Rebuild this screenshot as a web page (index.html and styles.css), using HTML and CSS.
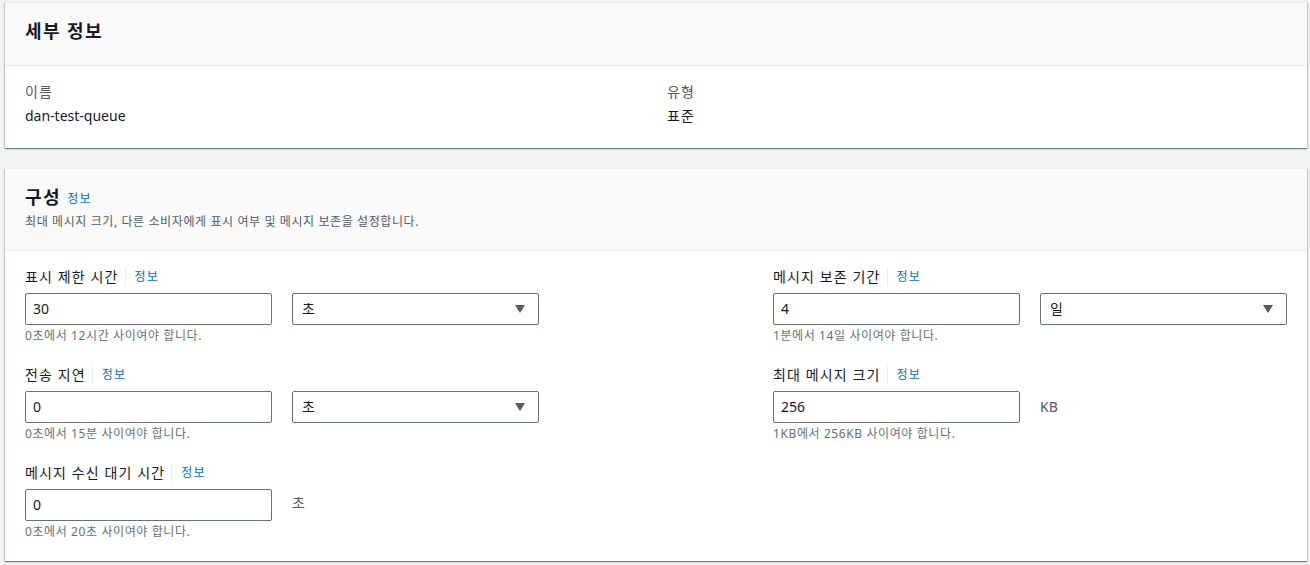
FILE: index.html
```html
<!DOCTYPE html>
<html lang="ko">
<head>
<meta charset="utf-8">
<title>dan-test-queue</title>
<link rel="stylesheet" href="styles.css">
</head>
<body>
<div class="page">
  <section class="card">
    <div class="card-header">
      <h2 class="title ko">세부 정보</h2>
    </div>
    <div class="card-body details">
      <div class="kv">
        <div class="k ko">이름</div>
        <div class="v">dan-test-queue</div>
      </div>
      <div class="kv">
        <div class="k ko">유형</div>
        <div class="v ko">표준</div>
      </div>
    </div>
  </section>

  <section class="card">
    <div class="card-header with-desc">
      <h2 class="title ko">구성 <a class="info head-info">정보</a></h2>
      <p class="desc ko">최대 메시지 크기, 다른 소비자에게 표시 여부 및 메시지 보존을 설정합니다.</p>
    </div>
    <div class="card-body config">
      <div class="col">
        <div class="field">
          <div class="label ko"><span>표시 제한 시간</span><a class="info">정보</a></div>
          <div class="controls">
            <div class="input">30</div>
            <div class="select"><span class="ko">초</span><span class="arrow"></span></div>
          </div>
          <div class="hint ko">0초에서 12시간 사이여야 합니다.</div>
        </div>
        <div class="field">
          <div class="label ko"><span>전송 지연</span><a class="info">정보</a></div>
          <div class="controls">
            <div class="input">0</div>
            <div class="select"><span class="ko">초</span><span class="arrow"></span></div>
          </div>
          <div class="hint ko">0초에서 15분 사이여야 합니다.</div>
        </div>
        <div class="field">
          <div class="label ko"><span>메시지 수신 대기 시간</span><a class="info">정보</a></div>
          <div class="controls">
            <div class="input">0</div>
            <div class="unit unit-up ko">초</div>
          </div>
          <div class="hint ko">0초에서 20초 사이여야 합니다.</div>
        </div>
      </div>
      <div class="col">
        <div class="field">
          <div class="label ko"><span>메시지 보존 기간</span><a class="info">정보</a></div>
          <div class="controls">
            <div class="input">4</div>
            <div class="select"><span class="ko">일</span><span class="arrow"></span></div>
          </div>
          <div class="hint ko">1분에서 14일 사이여야 합니다.</div>
        </div>
        <div class="field">
          <div class="label ko"><span>최대 메시지 크기</span><a class="info">정보</a></div>
          <div class="controls">
            <div class="input">256</div>
            <div class="unit">KB</div>
          </div>
          <div class="hint ko">1KB에서 256KB 사이여야 합니다.</div>
        </div>
      </div>
    </div>
  </section>
</div>
</body>
</html>
```

FILE: styles.css
```css
* { box-sizing: border-box; }
html, body {
  margin: 0;
  padding: 0;
  background: #f2f3f3;
}
body {
  font-family: "Noto Sans", "Noto Sans CJK KR", sans-serif;
  color: #16191f;
  font-size: 14px;
}
.ko {
  letter-spacing: 0.08em;
}
.page {
  padding: 2px 3px 0 5px;
}
.card {
  background: #ffffff;
  border-top: 1px solid #eaeded;
  box-shadow: 0 1px 1px 0 rgba(0, 28, 36, 0.35), 1px 1px 1px 0 rgba(0, 28, 36, 0.15), -1px 1px 1px 0 rgba(0, 28, 36, 0.15);
  margin-bottom: 20px;
}
.card-header {
  background: #fafafa;
  border-bottom: 1px solid #eaeded;
  padding: 15px 20px 21px;
}
.card-header.with-desc {
  padding-bottom: 19px;
}
.title {
  margin: 0;
  font-size: 18px;
  font-weight: 700;
  line-height: 26px;
  color: #16191f;
}
.head-info {
  font-size: 12px;
  margin-left: 0;
  vertical-align: 1px;
}
.info {
  color: #0073bb;
  font-weight: 400;
  font-size: 12px;
  cursor: pointer;
}
.desc {
  margin: 1px 0 0;
  font-size: 12px;
  line-height: 18px;
  color: #545b64;
  letter-spacing: 0.05em;
}
.card-body {
  padding: 15px 20px 21px;
}
.details {
  display: grid;
  grid-template-columns: 1fr 1fr;
  column-gap: 22px;
}
.k {
  color: #545b64;
  line-height: 22px;
}
.v {
  margin-top: 2px;
  line-height: 22px;
}
.config {
  display: grid;
  grid-template-columns: 728px 1fr;
  column-gap: 20px;
}
.col {
  display: flex;
  flex-direction: column;
  gap: 20px;
}
.label {
  display: flex;
  align-items: center;
  line-height: 22px;
  margin-bottom: 5px;
}
.label .info {
  border-left: 1px solid #eaeded;
  margin-left: 6px;
  padding-left: 9px;
  line-height: 18px;
}
.controls {
  display: flex;
  gap: 20px;
  align-items: center;
}
.input, .select {
  width: 247px;
  height: 32px;
  border: 1px solid #687078;
  border-radius: 2px;
  background: #fff;
  line-height: 30px;
}
.input {
  padding-left: 7px;
}
.select {
  display: flex;
  justify-content: space-between;
  align-items: center;
  padding: 0 13px 0 9px;
}
.arrow {
  width: 0;
  height: 0;
  border-left: 5px solid transparent;
  border-right: 5px solid transparent;
  border-top: 8px solid #545b64;
}
.unit {
  color: #545b64;
  line-height: 22px;
}
.unit-up {
  margin-top: -4px;
}
.hint {
  margin-top: 3px;
  font-size: 12px;
  line-height: 16px;
  color: #687078;
  letter-spacing: 0.05em;
}
```
